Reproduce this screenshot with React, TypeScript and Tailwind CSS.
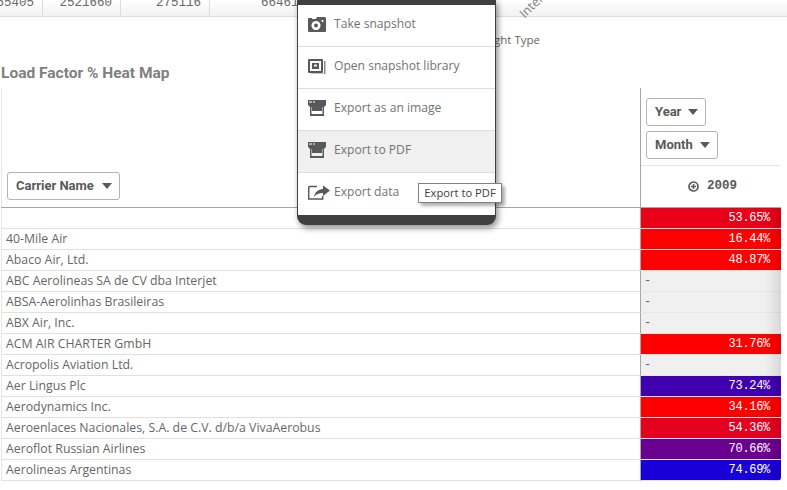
import React from "react";

const ui = "font-['Open_Sans','Noto_Sans',sans-serif]";
const mono = "font-['Liberation_Mono','DejaVu_Sans_Mono',monospace]";
const field = "font-['Roboto','Open_Sans',sans-serif]";

const rows: { name: string; value: string; color: string }[] = [
  { name: "", value: "53.65%", color: "bg-[#e90018]" },
  { name: "40-Mile Air", value: "16.44%", color: "bg-[#ff0000]" },
  { name: "Abaco Air, Ltd.", value: "48.87%", color: "bg-[#ff0000]" },
  { name: "ABC Aerolineas SA de CV dba Interjet", value: "-", color: "" },
  { name: "ABSA-Aerolinhas Brasileiras", value: "-", color: "" },
  { name: "ABX Air, Inc.", value: "-", color: "" },
  { name: "ACM AIR CHARTER GmbH", value: "31.76%", color: "bg-[#ff0000]" },
  { name: "Acropolis Aviation Ltd.", value: "-", color: "" },
  { name: "Aer Lingus Plc", value: "73.24%", color: "bg-[#4000b0]" },
  { name: "Aerodynamics Inc.", value: "34.16%", color: "bg-[#ff0000]" },
  { name: "Aeroenlaces Nacionales, S.A. de C.V. d/b/a VivaAerobus", value: "54.36%", color: "bg-[#e60020]" },
  { name: "Aeroflot Russian Airlines", value: "70.66%", color: "bg-[#6a0090]" },
  { name: "Aerolineas Argentinas", value: "74.69%", color: "bg-[#1a00d8]" },
];

function Caret() {
  return (
    <svg width="10" height="6" viewBox="0 0 10 6" className="shrink-0">
      <path d="M0 0h10L5 6z" fill="#595959" />
    </svg>
  );
}

function FieldButton({ label, className }: { label: string; className: string }) {
  return (
    <div
      className={`flex items-center justify-between h-[28px] pl-[8px] pr-[7px] bg-white border border-[#b4b4b4] rounded-[3px] text-[13px] font-bold text-[#595959] ${field} ${className}`}
    >
      <span>{label}</span>
      <Caret />
    </div>
  );
}

function CameraIcon() {
  return (
    <svg width="18" height="15" viewBox="0 0 18 15">
      <path
        fillRule="evenodd"
        fill="#595959"
        d="M1 1h3v1h4l1-2h7.500a1.500 1.500 0 0 1 1.500 1.500V14a1 1 0 0 1-1 1H1a1 1 0 0 1-1-1V2a1 1 0 0 1 1-1zM8 4a4.500 4.500 0 1 0 .01 0zM14.500 3a1 1 0 1 0 .01 0z"
      />
      <circle cx="8" cy="8.500" r="2" fill="#595959" />
    </svg>
  );
}

function LibraryIcon() {
  return (
    <svg width="18" height="15" viewBox="0 0 18 15">
      <path
        fillRule="evenodd"
        fill="#595959"
        d="M1 0h13a1 1 0 0 1 1 1v12a1 1 0 0 1-1 1H1a1 1 0 0 1-1-1V1a1 1 0 0 1 1-1zM2 2v10h11V2z"
      />
      <path fill="#8c8c8c" d="M16 2h1.500v13H3v-.500h13z" />
      <path fill="#595959" fillRule="evenodd" d="M4 4h7v6H4zM6 7.500h3V6.500a1 1 0 0 0-1-1H7a1 1 0 0 0-1 1z" />
    </svg>
  );
}

function PrintIcon() {
  return (
    <svg width="18" height="16" viewBox="0 0 18 16">
      <path fill="#595959" d="M0 0h18v5l-2 2h-2v4H4V7H2L0 5z" />
      <rect x="1" y="1.500" width="3" height="1" fill="#fff" />
      <rect x="5" y="1.500" width="2" height="1" fill="#fff" />
      <path fill="#595959" d="M2 7h1.500v7h11V7H16v9H2z" />
    </svg>
  );
}

function ExportIcon() {
  return (
    <svg width="22" height="15" viewBox="0 0 22 15" className="shrink-0">
      <path fill="none" stroke="#595959" strokeWidth="1.500" d="M9 1.500H1.700a1 1 0 0 0-1 1V14h14V11" />
      <path fill="#595959" d="M15 0.500l7 5-7 5.500V8c-4 0-7 1-9 4 .500-4.500 4-7.500 9-8z" />
    </svg>
  );
}

const menuItems = [
  { label: "Take snapshot", icon: <CameraIcon /> },
  { label: "Open snapshot library", icon: <LibraryIcon /> },
  { label: "Export as an image", icon: <PrintIcon /> },
  { label: "Export to PDF", icon: <PrintIcon />, hover: true },
  { label: "Export data", icon: <ExportIcon /> },
];

export default function App() {
  return (
    <div className={`relative w-[787px] h-[490px] overflow-hidden bg-white ${ui}`}>
      {/* Table above, only its last row is in view */}
      <div className={`flex h-[17px] overflow-hidden border-b border-[#dcdcdc] bg-gradient-to-b from-white to-[#f2f2f2] text-[12.500px] text-[#666] ${mono}`}>
        <div className="w-[43px] h-[16px] border-r border-[#dcdcdc] flex justify-end pr-[8px]">
          <span className="-mt-[5px] leading-[16px]">65405</span>
        </div>
        <div className="w-[78px] h-[16px] border-r border-[#dcdcdc] flex justify-end pr-[8px]">
          <span className="-mt-[5px] leading-[16px]">2521660</span>
        </div>
        <div className="w-[89px] h-[16px] border-r border-[#dcdcdc] flex justify-end pr-[8px]">
          <span className="-mt-[5px] leading-[16px]">275116</span>
        </div>
        <div className="pl-[51px] h-[16px]">
          <span className="block -mt-[5px] leading-[16px]">66461</span>
        </div>
      </div>

      <div className={`mt-[46px] h-[25px] pl-[1px] text-[15.500px] leading-[20px] font-bold text-[#7f7f7f] ${field}`}>
        Load Factor % Heat Map
      </div>

      {/* Pivot table */}
      <div className="relative w-[781px] pl-[1px] rounded-br-[4px] overflow-hidden">
        <div className="flex h-[120px] border-b border-[#a6a6a6]">
          <div className="w-[639px] border-l border-[#e6e6e6] flex items-end pl-[5px] pb-[7px]">
            <FieldButton label="Carrier Name" className="w-[113px]" />
          </div>
          <div className="w-[141px] border-l border-[#a6a6a6] flex flex-col">
            <div className="h-[78px] border-b border-[#e6e6e6] pl-[5px] pt-[10px] flex flex-col items-start gap-[5px]">
              <FieldButton label="Year" className="w-[60px]" />
              <FieldButton label="Month" className="w-[72px]" />
            </div>
            <div className={`flex-1 flex items-center justify-center gap-[8px] pl-[3px] text-[12.500px] font-bold text-[#595959] ${mono}`}>
              <svg width="11" height="11" viewBox="0 0 11 11">
                <circle cx="5.500" cy="5.500" r="4.500" fill="none" stroke="#595959" strokeWidth="1.700" />
                <path d="M5.500 3v5M3 5.500h5" stroke="#595959" strokeWidth="1.500" />
              </svg>
              <span>2009</span>
            </div>
          </div>
        </div>
        {rows.map((row) => (
          <div key={row.name} className="flex h-[21px]">
            <div className="w-[639px] border-l border-[#e6e6e6] border-b border-b-[#e0e0e0] pl-[4px] text-[12.300px] leading-[20px] text-[#666] whitespace-nowrap">
              {row.name}
            </div>
            <div className="w-[141px] border-l border-[#a6a6a6] border-b border-b-[#e6e6e6]">
              {row.value === "-" ? (
                <div className={`h-full bg-[#f0f0f0] pl-[3px] text-[12px] leading-[20px] text-[#666] ${mono}`}>-</div>
              ) : (
                <div className={`h-full ${row.color} pr-[11px] text-right text-[12px] tracking-[-0.3px] leading-[20px] text-white ${mono}`}>
                  {row.value}
                </div>
              )}
            </div>
          </div>
        ))}
        {/* scroll fade at the right edge */}
        <div className="absolute right-0 top-[120px] bottom-0 w-[16px] bg-gradient-to-r from-transparent to-black/10" />
      </div>

      {/* Bits of the chart behind the menu */}
      <div className="absolute left-[518px] -top-[3px] -rotate-45 text-[12.500px] text-[#808080]">Inter</div>
      <div className="absolute left-[494px] top-[32px] text-[11.500px] leading-[16px] text-[#666] w-[60px] overflow-hidden whitespace-nowrap">
        ght Type
      </div>

      {/* Context menu */}
      <div className="absolute left-[297px] top-0 w-[199px] h-[225px] pt-[5px] pb-[10px] px-[1px] bg-[#404040] rounded-b-[9px] shadow-[2px_3px_6px_rgba(0,0,0,0.45)]">
        <div className="bg-white h-full">
          {menuItems.map((item, i) => (
            <div
              key={item.label}
              className={`flex items-center h-[42px] pl-[10px] pb-[3px] gap-[8px] text-[12.100px] text-[#737373] ${
                i < menuItems.length - 1 ? "border-b border-[#dcdcdc]" : ""
              } ${item.hover ? "bg-[#f0f0f0]" : ""}`}
            >
              <div className="w-[18px] flex justify-start">{item.icon}</div>
              <span>{item.label}</span>
            </div>
          ))}
        </div>
      </div>

      {/* Tooltip */}
      <div className="absolute left-[418px] top-[183px] h-[20px] w-[84px] bg-white border border-[#808080] text-[11.200px] leading-[18px] text-center text-[#404040] shadow-[3px_3px_3px_rgba(0,0,0,0.3)] whitespace-nowrap">
        Export to PDF
      </div>
    </div>
  );
}
